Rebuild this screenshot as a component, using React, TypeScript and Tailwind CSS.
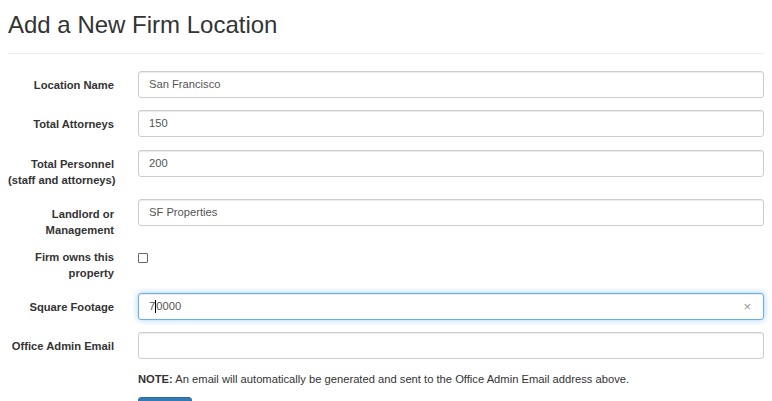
import React from "react";

const font = { fontFamily: '"Liberation Sans", Arial, sans-serif' };

function Label({ children, pt = "pt-[6px]" }: { children: React.ReactNode; pt?: string }) {
  return (
    <div className={`w-[130px] shrink-0 pr-[24px] text-right font-bold text-[11.2px] leading-[16px] text-[#333] whitespace-nowrap ${pt}`}>
      {children}
    </div>
  );
}

function Input({ value }: { value?: string }) {
  return (
    <div className="flex-1 h-[27px] rounded-[3px] border border-[#ccc] bg-white pl-[10px] flex items-center text-[11.2px] text-[#555] shadow-[inset_0_1px_1px_rgba(0,0,0,0.075)]">
      {value}
    </div>
  );
}

export default function App() {
  return (
    <div className="bg-white w-[772px] h-[401px] overflow-hidden px-[8px]" style={font}>
      <h1 className="text-[24px] leading-[26px] text-[#333] pt-[12px] font-normal">Add a New Firm Location</h1>
      <div className="mt-[15px] border-t border-[#eee]" />
      <div className="pt-[17px] flex flex-col">
        <div className="flex">
          <Label>Location Name</Label>
          <Input value="San Francisco" />
        </div>
        <div className="flex mt-[12px]">
          <Label>Total Attorneys</Label>
          <Input value="150" />
        </div>
        <div className="flex mt-[13px] items-start">
          <Label>
            Total Personnel
            <br />
            (staff and attorneys)
          </Label>
          <Input value="200" />
        </div>
        <div className="flex mt-[11px] items-start">
          <Label pt="pt-[7px]">
            Landlord or
            <br />
            Management
          </Label>
          <Input value="SF Properties" />
        </div>
        <div className="flex mt-[11px] items-start">
          <Label pt="pt-0">
            Firm owns this
            <br />
            property
          </Label>
          <div className="flex-1 pt-[4px]">
            <div className="w-[10px] h-[10px] border border-[#666] bg-white rounded-[1px]" />
          </div>
        </div>
        <div className="flex mt-[12px]">
          <Label>Square Footage</Label>
          <div className="flex-1 h-[27px] rounded-[3px] border border-[#66afe9] bg-white pl-[10px] pr-[12px] flex items-center text-[11.2px] text-[#555] shadow-[inset_0_1px_1px_rgba(0,0,0,0.075),0_0_6px_rgba(102,175,233,0.6)]">
            <span>7</span>
            <span className="w-px h-[13px] bg-black" />
            <span>0000</span>
            <span className="ml-auto text-[#999] text-[13px] leading-none">×</span>
          </div>
        </div>
        <div className="flex mt-[12px]">
          <Label>Office Admin Email</Label>
          <Input />
        </div>
        <div className="pl-[130px] mt-[13px] text-[11.2px] leading-[14px] text-[#333]">
          <b>NOTE:</b> An email will automatically be generated and sent to the Office Admin Email address above.
        </div>
        <div className="pl-[130px] mt-[11px]">
          <div className="w-[54px] h-[20px] rounded-[3px] bg-[#337ab7] border border-[#2e6da4]" />
        </div>
      </div>
    </div>
  );
}
